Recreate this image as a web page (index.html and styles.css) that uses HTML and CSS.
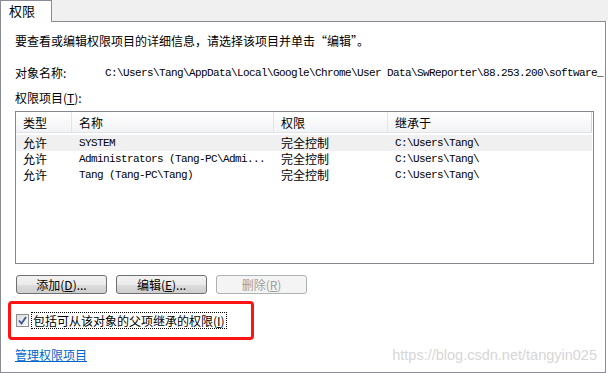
FILE: index.html
```html
<!doctype html>
<html>
<head>
  <link rel="stylesheet" href="styles.css">
</head>
<body>
  <div class="tabs">
    <div class="tab">权限</div>
    <div class="tab-fill"></div>
  </div>

  <div class="panel">
    <p class="intro">要查看或编辑权限项目的详细信息，请选择该项目并单击“编辑”。</p>

    <div class="object">
      <span class="object-label">对象名称:</span>
      <span class="mono object-path">C:\Users\Tang\AppData\Local\Google\Chrome\User Data\SwReporter\88.253.200\software_</span>
    </div>

    <p class="list-label">权限项目(<u>T</u>):</p>

    <div class="list">
      <div class="list-head">
        <div class="col c1">类型</div>
        <div class="col c2">名称</div>
        <div class="col c3">权限</div>
        <div class="col c4">继承于</div>
      </div>
      <div class="list-body">
        <div class="row selected">
          <div class="col c1">允许</div>
          <div class="col c2 mono">SYSTEM</div>
          <div class="col c3">完全控制</div>
          <div class="col c4 mono">C:\Users\Tang\</div>
        </div>
        <div class="row">
          <div class="col c1">允许</div>
          <div class="col c2 mono">Administrators (Tang-PC\Admi...</div>
          <div class="col c3">完全控制</div>
          <div class="col c4 mono">C:\Users\Tang\</div>
        </div>
        <div class="row">
          <div class="col c1">允许</div>
          <div class="col c2 mono">Tang (Tang-PC\Tang)</div>
          <div class="col c3">完全控制</div>
          <div class="col c4 mono">C:\Users\Tang\</div>
        </div>
      </div>
    </div>

    <div class="buttons">
      <button class="btn">添加(<u>D</u>)...</button>
      <button class="btn">编辑(<u>E</u>)...</button>
      <button class="btn" disabled>删除(<u>R</u>)</button>
    </div>

    <div class="highlight">
      <span class="check">
        <svg width="9" height="9" viewBox="0 0 9 9"><path d="M1 4.5 L3.5 7.5 L8 1" fill="none" stroke="#3c5796" stroke-width="1.8"/></svg>
      </span>
      <span class="check-label">包括可从该对象的父项继承的权限(<u>I</u>)</span>
    </div>

    <div class="footer">
      <a class="manage" href="#">管理权限项目</a>
      <span class="watermark">https://blog.csdn.net/tangyin025</span>
    </div>
  </div>
</body>
</html>
```

FILE: styles.css
```css
* {
  margin: 0;
  padding: 0;
  box-sizing: border-box;
}

body {
  width: 608px;
  height: 373px;
  background: #fff;
  font-family: "Noto Sans CJK SC", "Liberation Sans", sans-serif;
  font-size: 12px;
  color: #000;
  overflow: hidden;
}

.mono {
  font-family: "Liberation Mono", "Noto Sans CJK SC", monospace;
  font-size: 11px;
  letter-spacing: -0.6px;
}

.tabs {
  display: flex;
  height: 21px;
  background: #f0f0f0;
}

.tab {
  width: 52px;
  height: 22px;
  border: 1px solid #898c95;
  border-bottom: none;
  background: #fff;
  padding-left: 8px;
  line-height: 19px;
  font-size: 13px;
  position: relative;
  z-index: 1;
}

.tab-fill {
  flex: 1;
}

.panel {
  width: 606px;
  height: 352px;
  border: 1px solid #898c95;
  padding: 0 0 0 14px;
}

.intro {
  margin-top: 11px;
  line-height: 16px;
}

.object {
  display: flex;
  margin-top: 16px;
  line-height: 16px;
  white-space: nowrap;
  overflow: hidden;
}

.object-label {
  width: 90px;
  flex: none;
}

.list-label {
  margin-top: 9px;
  line-height: 16px;
}

.list {
  margin-top: 5px;
  width: 579px;
  height: 153px;
  border: 1px solid #828790;
}

.list-head {
  display: flex;
  height: 21px;
  margin-right: 1px;
  background: linear-gradient(#ffffff, #f2f3f5);
  border-bottom: 1px solid #e3e4e6;
  border-right: 1px solid #d5d5d5;
}

.list-head .col {
  line-height: 21px;
  border-right: 1px solid #e3e4e6;
}

.list-head .col.c4 {
  border-right: none;
}

.list-body {
  padding-top: 2px;
}

.row {
  display: flex;
  height: 16px;
  line-height: 16px;
  margin-right: 1px;
}

.row.selected {
  background: #f0f0f0;
}

.col {
  padding-left: 7px;
  white-space: nowrap;
  overflow: hidden;
}

.c1 { width: 56px; }
.c2 { width: 202px; }
.c3 { width: 114px; }
.c4 { flex: 1; }

.buttons {
  display: flex;
  gap: 9px;
  margin-top: 11px;
  margin-left: 1px;
}

.btn {
  width: 91px;
  height: 19px;
  border: 1px solid #707070;
  border-radius: 3px;
  background: linear-gradient(#f2f2f2 0%, #ebebeb 50%, #dddddd 51%, #cfcfcf 100%);
  font-family: "Noto Sans CJK SC", "Liberation Sans", sans-serif;
  font-size: 12px;
  color: #000;
  line-height: 16px;
}

.btn:disabled {
  border-color: #adb2b5;
  background: #f4f4f4;
  color: #9c9c9c;
}

.highlight {
  display: flex;
  align-items: center;
  gap: 3px;
  width: 246px;
  height: 39px;
  margin-top: 7px;
  margin-left: -7px;
  padding-left: 5px;
  border: 3px solid #ff1414;
  border-radius: 4px;
}

.check {
  width: 13px;
  height: 13px;
  border: 1px solid #8f8f8f;
  background: linear-gradient(135deg, #dcdcdc, #f8f8f8);
  display: flex;
  align-items: center;
  justify-content: center;
}

.check-label {
  outline: 1px dotted #000;
  line-height: 15px;
  padding: 0 1px;
}

.footer {
  display: flex;
  justify-content: space-between;
  align-items: center;
  margin-top: 7px;
  padding-right: 8px;
}

.manage {
  color: #0066cc;
  text-decoration: underline;
  line-height: 16px;
}

.watermark {
  font-family: "Liberation Sans", sans-serif;
  font-size: 14.5px;
  color: #d6d6d6;
}
```
